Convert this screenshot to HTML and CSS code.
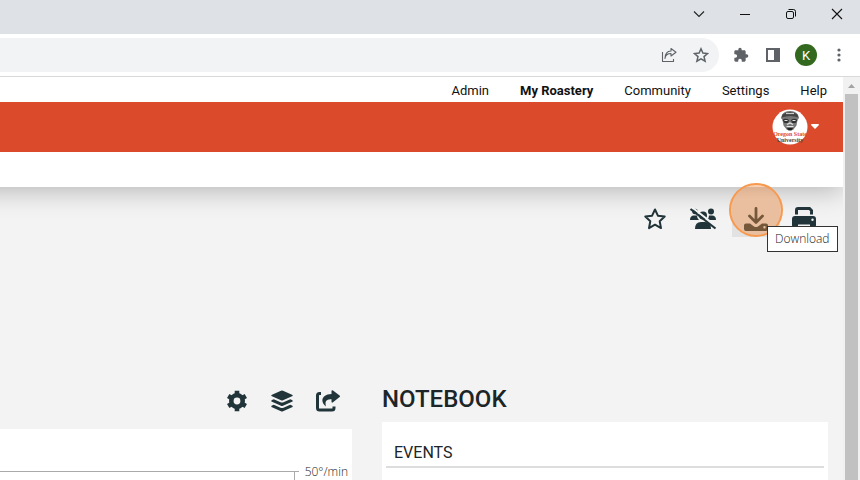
FILE: index.html
```html
<!DOCTYPE html>
<html lang="en">
<head>
  <meta charset="UTF-8"/>
  <meta name="viewport" content="width=device-width, initial-scale=1.0"/>
  <title>My Roastery</title>
  <link rel="stylesheet" href="styles.css">
</head>
<body>
  <!-- Browser window -->
  <div class="titlebar">
    <button class="win-btn" aria-label="Tab search">
      <svg width="12" height="12" viewBox="0 0 12 12"><path d="M1 3.5l5 5 5-5" fill="none" stroke="#222" stroke-width="1.1"/></svg>
    </button>
    <button class="win-btn" aria-label="Minimize">
      <svg width="12" height="12" viewBox="0 0 12 12"><path d="M1 6.5h10" stroke="#111"/></svg>
    </button>
    <button class="win-btn" aria-label="Restore">
      <svg width="12" height="12" viewBox="0 0 12 12" fill="none" stroke="#111"><rect x="1.5" y="3.5" width="7" height="7" rx="1.5"/><path d="M3.5 1.5h5a2 2 0 0 1 2 2v5"/></svg>
    </button>
    <button class="win-btn" aria-label="Close">
      <svg width="12" height="12" viewBox="0 0 12 12"><path d="M1 1l10 10M11 1L1 11" stroke="#111" stroke-width="1.1"/></svg>
    </button>
  </div>

  <div class="toolbar">
    <div class="omnibox">
      <button class="tool-btn" aria-label="Share this page">
        <svg width="16" height="16" viewBox="0 0 16 16" fill="none" stroke="#5f6368" stroke-width="1.1" stroke-linejoin="round"><path d="M1.5 5v9.5h11V12"/><path d="M4 11.5c.4-3.5 2.500-5 6-5V9L15 5.200l-5-3.700V4C6 4.200 4 7.500 4 11.500z"/></svg>
      </button>
      <button class="tool-btn" aria-label="Bookmark this tab">
        <svg width="16" height="16" viewBox="0 0 16 16"><path d="M8 1.800l1.900 4.300 4.600.4-3.500 3.100 1.100 4.600L8 11.800l-4.100 2.400L5 9.600 1.500 6.500l4.600-.4z" fill="none" stroke="#5f6368" stroke-width="1.5"/></svg>
      </button>
    </div>
    <button class="tool-btn" aria-label="Extensions">
      <svg width="16" height="16" viewBox="0 0 24 24" fill="#5f6368"><path d="M20.500 11H19V7c0-1.100-.9-2-2-2h-4V3.500a2.500 2.500 0 0 0-5 0V5H4c-1.100 0-2 .9-2 2v3.800h1.500a2.700 2.700 0 0 1 0 5.400H2V20c0 1.100.9 2 2 2h3.800v-1.500a2.700 2.700 0 0 1 5.400 0V22H17c1.100 0 2-.9 2-2v-4h1.500a2.500 2.500 0 0 0 0-5z"/></svg>
    </button>
    <button class="tool-btn" aria-label="Side panel">
      <svg width="16" height="16" viewBox="0 0 16 16"><path fill="#5f6368" fill-rule="evenodd" d="M1 1h14v14H1zM3 3v10h6V3z"/></svg>
    </button>
    <button class="profile" aria-label="Profile">K</button>
    <button class="tool-btn" aria-label="Menu">
      <svg width="16" height="16" viewBox="0 0 16 16" fill="#5f6368"><circle cx="8" cy="3" r="1.600"/><circle cx="8" cy="8" r="1.600"/><circle cx="8" cy="13" r="1.600"/></svg>
    </button>
  </div>

  <div class="viewport">
    <div class="page">
      <header>
        <nav>
          <a href="#">Admin</a>
          <a href="#" class="active">My Roastery</a>
          <a href="#">Community</a>
          <a href="#">Settings</a>
          <a href="#">Help</a>
        </nav>
        <div class="brandbar">
          <button class="account" aria-label="Account">
            <svg width="36" height="36" viewBox="0 0 36 36">
              <circle cx="18" cy="18" r="17.5" fill="#fff"/>
              <!-- mascot -->
              <path d="M10 6q2-4 8-4t8 4l1 3-1.500 2-1 5.500-3.500 4.500h-6l-3.500-4.500-1-5.500L9 9z" fill="#777"/>
              <path d="M10.500 5.500q7-5 15 0l1 3q-8-3-17 0z" fill="#444"/>
              <path d="M14 4.500h8" stroke="#ccc" stroke-width="1.2"/>
              <path d="M10.500 11q3-2.500 6.500 0l-1 3h-3.500zM19 11q3.500-2.500 6.500 0l-2 3H20z" fill="#333"/>
              <path d="M12.500 11.500h3M20.500 11.500h3M15 15.500l3-1.500 3 1.500M14.500 17.500h7" stroke="#e5e5e5" stroke-width="1.2" fill="none"/>
              <path d="M15 19h6l-1.500 2.500h-3z" fill="#222"/>
              <text x="18" y="27" class="logo-text logo-orange">Oregon State</text>
              <text x="18" y="33" class="logo-text">University</text>
            </svg>
            <svg width="8" height="6" viewBox="0 0 8 6"><path d="M1 0h6q1 0 1 1L4 5 0 1q0-1 1-1z" fill="#fff"/></svg>
          </button>
        </div>
        <div class="subbar"></div>
      </header>

      <main>
        <div class="actions">
          <button class="action" aria-label="Favorite">
            <svg width="24" height="24" viewBox="0 0 24 24"><path d="M12 2.500l2.900 6.200 6.800.8-5 4.700 1.300 6.900-6-3.400-6 3.400 1.300-6.900-5-4.700 6.800-.8z" fill="none" stroke="#20343a" stroke-width="2" stroke-linejoin="round"/></svg>
          </button>
          <button class="action" aria-label="Not shared">
            <svg width="28" height="24" viewBox="0 0 28 24" fill="#20343a">
              <circle cx="6" cy="4.500" r="2.800"/><circle cx="14" cy="8.500" r="4"/><circle cx="22" cy="4.500" r="3"/>
              <path d="M1 13q0-4.500 4-4.500h3q0 3 2 4.500zM18 13q2-1.500 2-4.500h3q4 0 4 4.500zM6 22q0-7 6-7h4q6 0 6 7z"/>
              <path d="M2.500 0l25 19.500" stroke="#f3f3f3" stroke-width="2"/>
              <path d="M1.500 2l25 19.500" stroke="#20343a" stroke-width="2.200"/>
            </svg>
          </button>
          <div class="download-wrap">
            <button class="action hovered" aria-label="Download">
              <svg width="24" height="24" viewBox="0 0 24 24"><path d="M12 1.500v13M5.500 9l6.500 6.500L18.500 9" fill="none" stroke="#20343a" stroke-width="2.800" stroke-linecap="round" stroke-linejoin="round"/><path fill="#20343a" fill-rule="evenodd" d="M2 16.500h4l4 3q2 1 4 0l4-3h4q2 0 2 2V22q0 2-2 2H2q-2 0-2-2v-3.500q0-2 2-2zM20.500 19a1.200 1.200 0 1 0 0 2.400 1.200 1.200 0 0 0 0-2.400z"/></svg>
            </button>
            <span class="click-spot"></span>
            <span class="tooltip">Download</span>
          </div>
          <button class="action" aria-label="Print">
            <svg width="24" height="24" viewBox="0 0 24 24"><path d="M4.500 7.500V3q0-1.500 1.500-1.500h11.500l2 2v4" fill="none" stroke="#20343a" stroke-width="3"/><path fill="#20343a" fill-rule="evenodd" d="M3 9h18q3 0 3 3v6.500q0 1.500-1.500 1.500H21v3H3v-3H1.500Q0 20 0 18.500V12q0-3 3-3zM6 17.500v3h12v-3z"/><circle cx="20.500" cy="12.800" r="1.200" fill="#f3f3f3"/></svg>
          </button>
        </div>

        <div class="columns">
          <section class="graph">
            <div class="graph-tools">
              <button class="action" aria-label="Graph settings">
                <svg width="22" height="22" viewBox="0 0 22 22"><circle cx="11" cy="11" r="5.700" fill="none" stroke="#20343a" stroke-width="4.600"/><path d="M11 .8v4M11 17.200v4M2.200 5.900l3.400 2M16.400 14.100l3.400 2M2.200 16.100l3.400-2M16.400 7.900l3.400-2" stroke="#20343a" stroke-width="4.600"/></svg>
              </button>
              <button class="action" aria-label="Layers">
                <svg width="22" height="22" viewBox="0 0 22 22" fill="#20343a"><path d="M11 .5q.5 0 1 .2l9 4q1.600.8 0 1.600l-9 4q-1 .4-2 0l-9-4q-1.600-.8 0-1.600l9-4q.5-.2 1-.2z"/><path d="M1 10l1.800-.8 6.700 3q1.500.6 3 0l6.700-3 1.800.8q1.500.9 0 1.700l-9 4q-1 .4-2 0l-9-4q-1.500-.8 0-1.700z"/><path d="M1 15.500l1.800-.8 6.700 3q1.500.6 3 0l6.700-3 1.800.8q1.500.9 0 1.700l-9 4q-1 .4-2 0l-9-4q-1.500-.8 0-1.700z"/></svg>
              </button>
              <button class="action" aria-label="Export">
                <svg width="24" height="22" viewBox="0 0 24 22"><path d="M5 3.500H3.500q-2 0-2 2v12.500q0 2 2 2h12.500q2 0 2-2V16.500" fill="none" stroke="#20343a" stroke-width="3"/><path d="M15.500 1.200q0-1.700 1.500-.7l6.600 5q.8.800 0 1.600L17 12.300q-1.500 1-1.500-.7V9.200c-5 0-7 2-5.500 7.300-6.500-4.500-4-12.500 5.500-12.500z" fill="#20343a"/></svg>
              </button>
            </div>
            <div class="graph-card">
              <div class="axis"><div class="axis-line"></div></div>
              <span class="axis-label">50°/min</span>
            </div>
          </section>
          <section class="notebook">
            <h2>NOTEBOOK</h2>
            <div class="note-card">
              <h3>EVENTS</h3>
            </div>
          </section>
        </div>
      </main>
    </div>
    <div class="scrollbar">
      <svg width="17" height="17" viewBox="0 0 17 17"><path d="M5 11l3.500-4L12 11z" fill="#a3a3a3"/></svg>
      <div class="thumb"></div>
    </div>
  </div>
</body>
</html>
```

FILE: styles.css
```css
* {
  box-sizing: border-box;
}
body {
  margin: 0;
  height: 100vh;
  display: flex;
  flex-direction: column;
  overflow: hidden;
  font-family: Roboto, sans-serif;
  color: #1c2528;
  background: #f3f3f3;
}
button {
  border: none;
  background: none;
  padding: 0;
  display: flex;
  align-items: center;
  justify-content: center;
  font-family: inherit;
  cursor: pointer;
}
svg {
  display: block;
}

/* Browser window */
.titlebar {
  flex: none;
  height: 34px;
  display: flex;
  justify-content: flex-end;
  background: #dee1e6;
}
.win-btn {
  width: 46px;
  height: 28px;
}
.toolbar {
  flex: none;
  height: 43px;
  display: flex;
  align-items: center;
  gap: 12px;
  padding-right: 11px;
  background: #fff;
  border-bottom: 1px solid #d8d9db;
}
.omnibox {
  flex: 1;
  height: 34px;
  display: flex;
  align-items: center;
  justify-content: flex-end;
  gap: 12px;
  padding-right: 8px;
  border-radius: 0 17px 17px 0;
  background: #f1f3f4;
}
.tool-btn {
  width: 20px;
  height: 20px;
}
.profile {
  width: 22px;
  height: 22px;
  border-radius: 50%;
  background: #33691e;
  color: #fff;
  font-size: 13px;
}

/* Page and scrollbar */
.viewport {
  flex: 1;
  min-height: 0;
  display: flex;
}
.page {
  flex: 1;
  min-width: 0;
  overflow: hidden;
}
.scrollbar {
  width: 17px;
  display: flex;
  flex-direction: column;
  background: #f1f1f1;
}
.thumb {
  flex: 1;
  margin: 0 2px;
  background: #c1c1c1;
}

/* Header */
header {
  margin-left: -30px;
  box-shadow: 0 4px 24px rgba(0,0,0,0.25);
}
nav {
  height: 25px;
  display: flex;
  align-items: center;
  justify-content: flex-end;
  gap: 31px;
  padding: 2px 16px 0;
  background: #fff;
  font-size: 13px;
}
nav a {
  color: #111;
  text-decoration: none;
}
nav .active {
  font-weight: bold;
}
.brandbar {
  height: 50px;
  display: flex;
  align-items: center;
  justify-content: flex-end;
  padding-right: 24px;
  background: #db4a2b;
}
.account {
  gap: 3px;
}
.logo-text {
  font: bold 6px "Liberation Serif", serif;
  text-anchor: middle;
  fill: #444;
}
.logo-orange {
  fill: #db4a2b;
}
.subbar {
  height: 35px;
  background: #fff;
}

/* Actions */
.actions {
  display: flex;
  justify-content: flex-end;
  padding: 13px 15px 0 0;
}
.actions .action {
  width: 48px;
  height: 37px;
}
.download-wrap {
  position: relative;
  margin-left: 5px;
}
.actions .hovered {
  background: #e2e2e2;
}
.click-spot {
  position: absolute;
  left: -3px;
  top: -17px;
  width: 54px;
  height: 54px;
  border: 2px solid #f79a50;
  border-radius: 50%;
  background: rgba(245,140,60,0.4);
}
.tooltip {
  position: absolute;
  z-index: 1;
  left: 35px;
  top: 26px;
  padding: 4px 7px;
  border: 1px solid #333;
  background: #fff;
  color: #222;
  font: 300 12px/16px "Open Sans", sans-serif;
}

/* Graph and notebook */
.columns {
  display: grid;
  grid-template-columns: 352px 1fr;
  gap: 30px;
  padding: 144px 15px 0 0;
}
.graph-tools {
  height: 48px;
  display: flex;
  align-items: center;
  justify-content: flex-end;
  gap: 23px;
  padding: 0 12px 8px 0;
}
.graph-card {
  height: 200px;
  display: flex;
  gap: 6px;
  padding: 35px 4px 0 0;
  background: #fff;
}
.axis {
  flex: 1;
  display: flex;
  margin-top: 7px;
  padding-right: 4px;
  border-top: 1px solid #aaa;
}
.axis-line {
  flex: 1;
  border-right: 1px solid #aaa;
}
.axis-label {
  color: #222;
  font: 300 12px/16px "Open Sans", sans-serif;
}
.notebook h2 {
  margin: 0;
  height: 41px;
  font-size: 24px;
  font-weight: 500;
  line-height: 36px;
}
.note-card {
  height: 200px;
  padding: 18px 4px 0;
  background: #fff;
}
.note-card h3 {
  margin: 0;
  padding: 0 8px;
  border-bottom: 2px solid #ddd;
  font-size: 16px;
  font-weight: normal;
  line-height: 26px;
}
```
